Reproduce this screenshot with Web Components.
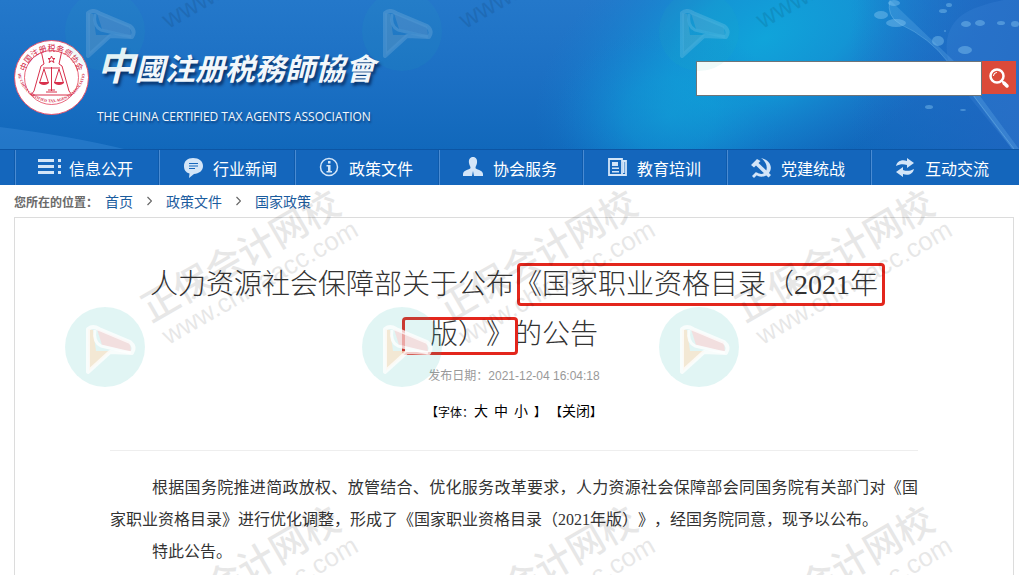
<!DOCTYPE html>
<html lang="zh-CN">
<head>
<meta charset="utf-8">
<meta name="viewport" content="width=device-width, initial-scale=1">
<title>中国注册税务师协会</title>
<style>
    :root {
        --sans: "Liberation Sans", "Noto Sans CJK SC", sans-serif;
        --song: "Liberation Serif", "Noto Sans CJK SC", sans-serif;
        --nav-bg: #1466bc;
        --nav-icon: #d3e5f8;
        --link-color: #1b5c9e;
        --line: #dcdcdc;
        --mark: #e3261c;
    }
    body {
        margin: 0;
        background: #fff;
        font-family: var(--sans);
        text-spacing-trim: space-all;
    }
</style>
</head>
<body>
<tax-page>
    <tax-header slot="header">
        <tax-logo></tax-logo>
        <tax-search slot="tools"></tax-search>
    </tax-header>
    <tax-nav slot="nav">
        <tax-nav-item icon="list">信息公开</tax-nav-item>
        <tax-nav-item icon="chat">行业新闻</tax-nav-item>
        <tax-nav-item icon="info">政策文件</tax-nav-item>
        <tax-nav-item icon="user">协会服务</tax-nav-item>
        <tax-nav-item icon="news">教育培训</tax-nav-item>
        <tax-nav-item icon="party">党建统战</tax-nav-item>
        <tax-nav-item icon="swap">互动交流</tax-nav-item>
    </tax-nav>
    <tax-crumbs label="您所在的位置：" path="首页,政策文件,国家政策"></tax-crumbs>
    <tax-article date="2021-12-04 16:04:18">
        <span slot="title">人力资源社会保障部关于公布《国家职业资格目录（2021年版）》的公告</span>
        <tax-paragraph>根据国务院推进简政放权、放管结合、优化服务改革要求，人力资源社会保障部会同国务院有关部门对《国家职业资格目录》进行优化调整，形成了《国家职业资格目录（2021年版）》，经国务院同意，现予以公布。</tax-paragraph>
        <tax-paragraph>特此公告。</tax-paragraph>
    </tax-article>
</tax-page>
<tax-watermark></tax-watermark>

<script>

/**
 * attaches an open shadow root with the given markup
 * @param {HTMLElement} element
 * @param {string} html
 */
function make_shadow(element, html) {
    let root = element.attachShadow({mode: "open"})
    root.innerHTML = html
    return root
}

// ================================================================

class TaxPage extends HTMLElement {
    constructor() {
        super();
        make_shadow(this, `
            <style>
                :host { display: flex; flex-direction: column; min-height: 100vh; }
                main { flex: 1; display: flex; flex-direction: column; padding: 0 5px 0 14px; }
            </style>
            <slot name="header"></slot>
            <slot name="nav"></slot>
            <main><slot></slot></main>
        `)
    }
}
customElements.define("tax-page", TaxPage);

// ================================================================

/**
 * The blue banner.
 *
 * slots:
 *  - (default) the logo
 *  - tools
 */
class TaxHeader extends HTMLElement {
    constructor() {
        super();
        make_shadow(this, `
            <style>
                :host { display: block; position: relative; overflow: hidden; background: #1a6fc2; }
                header {
                    position: relative;
                    display: flex;
                    justify-content: space-between;
                    align-items: flex-start;
                    padding: 36px 3px 0 14px;
                    min-height: 113px;
                }
                .scene { position: absolute; inset: 0; width: 100%; height: 100%; }
            </style>
            <svg class="scene" viewBox="0 0 1019 149" preserveAspectRatio="none" aria-hidden="true">
                <defs>
                    <linearGradient id="base" x1="0" y1="0" x2="0" y2="1">
                        <stop offset="0" stop-color="#2478ca"/>
                        <stop offset="0.5" stop-color="#1c70c4"/>
                        <stop offset="1" stop-color="#1168bb"/>
                    </linearGradient>
                    <radialGradient id="glow">
                        <stop offset="0" stop-color="#10a4da"/>
                        <stop offset="0.4" stop-color="#109dd8" stop-opacity="0.8"/>
                        <stop offset="0.75" stop-color="#128cd4" stop-opacity="0.35"/>
                        <stop offset="1" stop-color="#1480d0" stop-opacity="0"/>
                    </radialGradient>
                    <linearGradient id="right" x1="0" y1="0" x2="1" y2="0">
                        <stop offset="0" stop-color="#1c66c2" stop-opacity="0"/>
                        <stop offset="1" stop-color="#1f66c0" stop-opacity="0.9"/>
                    </linearGradient>
                </defs>
                <rect width="1019" height="149" fill="url(#base)"/>
                <path d="M0 127Q70 136 124 149H0Z" fill="#3a8ad6" opacity="0.45"/>
                <ellipse cx="765" cy="38" rx="250" ry="140" fill="url(#glow)" transform="rotate(-28 765 38)"/>
                <ellipse cx="670" cy="115" rx="115" ry="90" fill="url(#glow)" opacity="0.5"/>
                <rect x="850" width="169" height="149" fill="url(#right)"/>
                <path d="M948 60Q940 22 975 8Q995 0 1019 -2V149H1012L970 98Z" fill="#4a8fe0" opacity="0.2"/>
                <path d="M890 0Q886 16 900 24Q930 38 948 62L1012 149H1019L955 62" fill="#7cc4f4" opacity="0.22"/>
                <path d="M890 0Q886 16 900 24Q930 38 948 62L1014 149" fill="none" stroke="#8fd0f6" opacity="0.3"/>
                <g fill="#8ccdf5" opacity="0.4">
                    <ellipse cx="881" cy="15" rx="7" ry="4"/>
                    <ellipse cx="896" cy="23" rx="10" ry="4"/>
                    <ellipse cx="894" cy="3" rx="6" ry="3"/>
                    <ellipse cx="938" cy="41" rx="6" ry="5"/>
                    <ellipse cx="943" cy="11" rx="4" ry="2"/>
                    <ellipse cx="949" cy="5" rx="3" ry="2"/>
                    <ellipse cx="965" cy="50" rx="7" ry="4"/>
                    <ellipse cx="966" cy="24" rx="5" ry="3"/>
                    <ellipse cx="980" cy="23" rx="5" ry="3"/>
                    <ellipse cx="1001" cy="23" rx="4" ry="2"/>
                    <ellipse cx="1015" cy="24" rx="4" ry="3"/>
                    <ellipse cx="929" cy="107" rx="4" ry="2"/>
                    <ellipse cx="963" cy="110" rx="3" ry="1"/>
                    <circle cx="945" cy="31" r="1"/>
                </g>
            </svg>
            <header>
                <slot></slot>
                <slot name="tools"></slot>
            </header>
        `)
    }
}
customElements.define("tax-header", TaxHeader);

// ================================================================

class TaxLogo extends HTMLElement {
    constructor() {
        super();
        make_shadow(this, `
            <style>
                :host { display: block; }
                a { display: flex; gap: 8px; color: #f2f7fb; text-decoration: none; }
                svg { width: 75px; height: 75px; margin-top: 4px; flex: none; }
                .names { display: flex; flex-direction: column; gap: 8px; }
                .zh {
                    font: italic 700 30px/56px "Noto Sans CJK TC", "Noto Sans CJK SC", sans-serif;
                    white-space: nowrap;
                    text-shadow: 2px 3px 3px rgba(0, 25, 70, 0.7);
                }
                .zh::first-letter { font-size: 38px; }
                .en {
                    font: 12px/28px "Open Sans", "Noto Sans", sans-serif;
                    white-space: nowrap;
                    text-shadow: 1px 2px 2px rgba(0, 25, 70, 0.5);
                }
            </style>
            <a href="#">
                <svg viewBox="0 0 75 75" aria-hidden="true">
                    <defs>
                        <path id="top" d="M11 43A27 27 0 1 1 64 43"/>
                        <path id="low" d="M4 34A34 34 0 0 0 71 34"/>
                    </defs>
                    <circle cx="37.5" cy="37.5" r="37" fill="#fff" stroke="#e5506a"/>
                    <circle cx="37.5" cy="37.5" r="27" fill="none" stroke="#e2405c" stroke-width="0.8"/>
                    <g fill="none" stroke="#d8304c" stroke-width="1">
                        <path d="M27.5 12.5L30 24L27 26L20 51L17 55M47.500 12.500L45 24L48 26L55 51L58 55M18 55H57"/>
                        <path d="M29 28H46M37.500 27V51M32 52H43M34 50H41"/>
                        <path d="M30 29L25.500 43H34.500ZM45 29L40.500 43H49.500Z"/>
                    </g>
                    <path d="M25 42H35Q34 45 30 45Q26 45 25 42ZM40 42H50Q49 45 45 45Q41 45 40 42Z" fill="#d8304c"/>
                    <path d="M37.500 16L38.500 18.500H41L39 20L40 22.500L37.500 21L35 22.500L36 20L34 18.500H36.500Z" fill="none" stroke="#d8304c"/>
                    <text fill="#d22543" font-size="8" font-family="Noto Sans CJK SC"><textPath href="#top" startOffset="50%" text-anchor="middle">中国注册税务师协会</textPath></text>
                    <text fill="#d22543" font-size="4" font-weight="700" font-family="Liberation Serif"><textPath href="#low" startOffset="50%" text-anchor="middle">THE CHINA CERTIFIED TAX AGENTS ASSOCIATION</textPath></text>
                </svg>
                <span class="names">
                    <span class="zh">中國注册税務師協會</span>
                    <span class="en">THE CHINA CERTIFIED TAX AGENTS ASSOCIATION</span>
                </span>
            </a>
        `)
    }
}
customElements.define("tax-logo", TaxLogo);

// ================================================================

class TaxSearch extends HTMLElement {
    constructor() {
        super();
        make_shadow(this, `
            <style>
                :host { display: block; margin-top: 25px; }
                form { display: flex; align-items: flex-start; margin: 0; }
                input {
                    box-sizing: border-box;
                    width: 286px;
                    height: 35px;
                    padding: 0 8px;
                    border: 1px solid #6f7478;
                    border-radius: 0;
                    background: #fff;
                    font: 14px var(--sans);
                    outline: none;
                }
                button {
                    display: grid;
                    place-items: center;
                    width: 34px;
                    height: 33px;
                    padding: 0;
                    border: 0;
                    background: #db4a39;
                    cursor: pointer;
                }
                svg { width: 22px; height: 22px; }
            </style>
            <form role="search">
                <input type="text" aria-label="搜索">
                <button type="button" aria-label="搜索">
                    <svg viewBox="0 0 22 22" fill="none" stroke="#fff" stroke-linecap="round">
                        <circle cx="9" cy="9" r="6.500" stroke-width="2.500"/>
                        <path d="M5.500 8.500Q6 6 8.500 5.500" stroke-width="1.200"/>
                        <path d="M14 14L15 15" stroke-width="2"/>
                        <path d="M16 16L19 19" stroke-width="3.500"/>
                    </svg>
                </button>
            </form>
        `)
    }
}
customElements.define("tax-search", TaxSearch);

// ================================================================

class TaxNav extends HTMLElement {
    constructor() {
        super();
        make_shadow(this, `
            <style>
                :host { display: block; background: var(--nav-bg); border-top: 1px solid #0c55a4; }
                nav {
                    display: grid;
                    grid-template-columns: 144fr 136fr repeat(5, 144fr);
                    margin: 0 4px 0 15px;
                }
            </style>
            <nav><slot></slot></nav>
        `)
    }
}
customElements.define("tax-nav", TaxNav);

const ICONS = {
    list: `<path d="M1 3H17V6H1ZM1 9H17V12H1ZM1 15H17V18H1ZM21 3H24V6H21ZM21 9H24V12H21ZM21 15H24V18H21Z"/>`,
    chat: `<path d="M12 2C18 2 22 5 22 10C22 15 18 17.500 13 18L8 22L8.500 17.500C4.500 16.500 3 13.500 3 10C3 5 6.500 2 12 2Z"/>
        <path d="M8 7.500H17M8 10H17M8 12.500H14" stroke="#1466bc" stroke-width="1"/>`,
    info: `<circle cx="12" cy="11" r="8.500" fill="none" stroke="currentColor" stroke-width="1.500"/>
        <path d="M11 5H13.500V7.500H11ZM9.500 9H13.500V15H15V16.500H9.500V15H11V10.500H9.500Z"/>`,
    user: `<path d="M12 1C15 1 16.500 3.500 16 7C15.700 9 14.500 10.500 14.500 12C14.500 13.500 22 14 22 18V20H13L12 15L11 20H2V18C2 14 9.500 13.500 9.500 12C9.500 10.500 8.300 9 8 7C7.500 3.500 9 1 12 1Z"/>`,
    news: `<path d="M4 3H17V19H4ZM17 5H21V19H16" fill="none" stroke="currentColor" stroke-width="1.800"/>
        <path d="M7 6H13V10H7ZM7 11.500H14V13H7ZM7 15H14V16.500H7ZM18 6H19.500V17H18Z"/>`,
    party: `<path d="M12 2C21 4 25 12 19 18C15 22 9 21 6 18L8 16.500C12 19 15 18 17 15C19 11 17 5.500 12 2Z"/>
        <path d="M2 9L8 3L11.500 5L9.500 7L22 19L19.500 21.500L7 9.500L5 11.500ZM7 16L9 18L5 22L3 20Z"/>`,
    swap: `<path d="M3 10C4 5 9 3 14 5V2L21 7L14 12V9C10 7.500 7 8 3 10ZM21 13C20 18 15 20 10 18V21L3 16L10 11V14C14 15.500 17 15 21 13Z"/>`
}

/**
 * One entry of the main menu, the icon attribute is a key of ICONS.
 */
class TaxNavItem extends HTMLElement {
    constructor() {
        super();
        make_shadow(this, `
            <style>
                :host {
                    display: block;
                    border-left: 1px solid #4a8bd2;
                    box-shadow: -1px 0 0 #0e5aab;
                }
                a {
                    display: flex;
                    align-items: center;
                    gap: 8px;
                    height: 35px;
                    padding-left: 21px;
                    color: #fff;
                    font-size: 16px;
                    white-space: nowrap;
                    text-decoration: none;
                }
                svg { width: 24px; height: 24px; flex: none; color: var(--nav-icon); fill: currentColor; }
            </style>
            <a href="#">
                <svg viewBox="0 0 24 24" aria-hidden="true"></svg>
                <span><slot></slot></span>
            </a>
        `)
    }

    connectedCallback() {
        this.shadowRoot.querySelector("svg").innerHTML = ICONS[this.getAttribute("icon")]
    }
}
customElements.define("tax-nav-item", TaxNavItem);

// ================================================================

class TaxCrumbs extends HTMLElement {
    constructor() {
        super();
        make_shadow(this, `
            <style>
                :host { display: block; }
                nav { display: flex; align-items: center; gap: 7px; height: 32px; white-space: nowrap; }
                b { font-size: 12px; color: #6a6a6a; }
                div { display: flex; align-items: center; gap: 14px; }
                a { font-size: 14px; color: var(--link-color); text-decoration: none; }
                svg { width: 5px; height: 10px; fill: none; stroke: #666; stroke-width: 1.2; }
            </style>
            <nav><b></b><div></div></nav>
        `)
    }

    connectedCallback() {
        this.shadowRoot.querySelector("b").textContent = this.getAttribute("label")
        let arrow = `<svg viewBox="0 0 5 10" aria-hidden="true"><path d="M0.500 1L4.500 5L0.500 9"/></svg>`
        let links = this.getAttribute("path").split(",").map(name => `<a href="#">${name}</a>`)
        this.shadowRoot.querySelector("div").innerHTML = links.join(arrow)
    }
}
customElements.define("tax-crumbs", TaxCrumbs);

// ================================================================

/**
 * The announcement.
 *
 * slots:
 *  - title
 *  - (default) the paragraphs
 */
class TaxArticle extends HTMLElement {
    constructor() {
        super();
        make_shadow(this, `
            <style>
                :host { display: block; flex: 1; border: 1px solid var(--line); border-bottom: 0; }
                article { padding: 42px 95px 0; }
                .title { position: relative; padding: 0 28px; }
                h1 {
                    margin: 0;
                    font: 300 28px/50px var(--song);
                    color: #333;
                    text-align: center;
                }
                /* red frames drawn over the heading */
                .frame { position: absolute; box-sizing: border-box; border: 3px solid var(--mark); border-radius: 4px; }
                .frame.first { left: calc(50% + 3px); top: 3px; width: 368px; height: 43px; }
                .frame.second { right: calc(50% - 4px); top: 57px; width: 116px; height: 38px; }
                .date { margin: 4px 0 0; font-size: 12px; line-height: 24px; color: #999; text-align: center; }
                .tools {
                    display: flex;
                    justify-content: center;
                    align-items: center;
                    height: 24px;
                    margin-top: 11px;
                    gap: 4px;
                    font-size: 12px;
                    color: #000;
                    white-space: nowrap;
                }
                .sizes { display: flex; align-items: center; gap: 6px; }
                .sizes > span:first-child { margin-right: -6px; }
                .close { display: flex; align-items: center; }
                button, a {
                    padding: 0;
                    border: 0;
                    background: none;
                    color: inherit;
                    font: 14px/24px var(--sans);
                    text-decoration: none;
                    cursor: pointer;
                }
                hr { margin: 27px 0 21px; border: 0; border-top: 1px solid #eee; }
            </style>
            <article>
                <div class="title">
                    <h1><slot name="title"></slot></h1>
                    <span class="frame first"></span>
                    <span class="frame second"></span>
                </div>
                <p class="date">发布日期：<time></time></p>
                <div class="tools">
                    <div class="sizes">
                        <span>【字体：</span>
                        <button type="button">大</button>
                        <button type="button">中</button>
                        <button type="button">小</button>
                        <span>】</span>
                    </div>
                    <div class="close"><span>【</span><a href="#">关闭</a><span>】</span></div>
                </div>
                <hr>
                <slot></slot>
            </article>
        `)
    }

    connectedCallback() {
        this.shadowRoot.querySelector("time").textContent = this.getAttribute("date")
    }
}
customElements.define("tax-article", TaxArticle);

class TaxParagraph extends HTMLElement {
    constructor() {
        super();
        make_shadow(this, `
            <style>
                :host { display: block; }
                p {
                    margin: 0;
                    font: 16px/32px var(--song);
                    color: #333;
                    text-indent: 42px;
                    text-align: justify;
                }
            </style>
            <p><slot></slot></p>
        `)
    }
}
customElements.define("tax-paragraph", TaxParagraph);

// ================================================================

/**
 * The repeated stamp over the whole page: a round badge and two slanted lines.
 */
class TaxWatermark extends HTMLElement {
    constructor() {
        super();
        let stamps = ""
        for (let row = -1; row < 2; row++) {
            // the first row lies on the blue banner, only the start of its address is on the page
            let banner = row < 0
            for (let col = 0; col < 3; col++) {
                stamps += `
                    <g transform="translate(${105 + col * 297} ${347 + row * 316})">
                        <circle r="40" fill="#27b9ae" opacity="${banner ? 0.08 : 0.14}"/>
                        <g opacity="${banner ? 0.18 : 1}">
                            <path d="M-17 -18L-12 -17L-9 4L6 4L-16 24Z" fill="#fbe3c6" opacity="0.7"/>
                            <path d="M-8 -18L25 -5L26 5L-3 -2Z" fill="#f9d6d6" opacity="0.7"/>
                            <path d="M-17 -18Q-12 -22 -6 -18L25 -5Q31 0 27 6L5 5L-17 25Z" fill="none" stroke="#fff" stroke-width="4" stroke-linejoin="round" opacity="0.75"/>
                            <path d="M-10 -17Q-12 -5 -4 -1L26 6" fill="none" stroke="#fff" stroke-width="3" stroke-linejoin="round" opacity="0.75"/>
                        </g>
                        <g transform="translate(46 -24) rotate(-30)" fill="#000" opacity="0.09">
                            ${banner ? "" : `<text class="zh">正保会计网校</text>`}
                            <text class="en" x="4" y="28">${banner ? "www." : "www.chinaacc.com"}</text>
                        </g>
                    </g>`
            }
        }
        make_shadow(this, `
            <style>
                :host { position: absolute; inset: 0; overflow: hidden; pointer-events: none; }
                svg { display: block; width: 100%; height: 100%; }
                .zh { font: 500 37px "Noto Sans CJK SC", sans-serif; }
                .en { font: 26px "Liberation Sans", sans-serif; }
            </style>
            <svg aria-hidden="true">${stamps}</svg>
        `)
    }
}
customElements.define("tax-watermark", TaxWatermark);

// ================================================================

</script>
</body>
</html>
